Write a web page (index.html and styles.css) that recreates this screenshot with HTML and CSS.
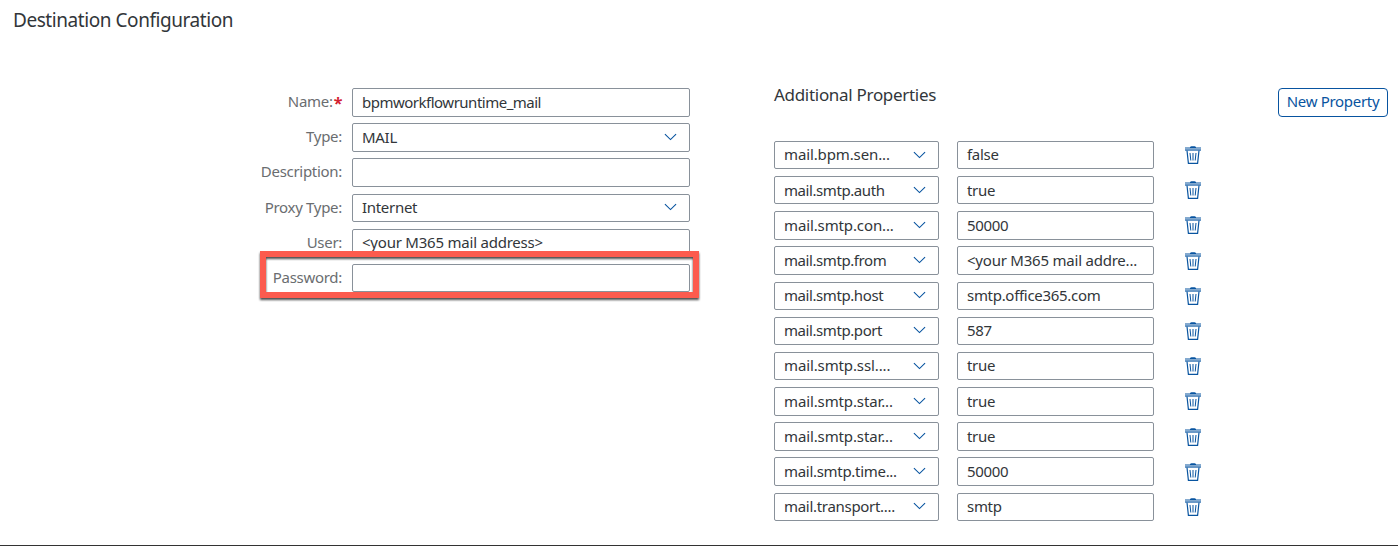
FILE: index.html
```html
<!DOCTYPE html>
<html lang="en">
<head>
<meta charset="utf-8">
<title>Destination Configuration</title>
<link rel="stylesheet" href="styles.css">
</head>
<body>
<svg width="0" height="0" class="defs">
  <symbol id="chevron" viewBox="0 0 14 8"><path d="M1 1 L7 6.8 L13 1" fill="none" stroke="currentColor" stroke-width="1.2"/></symbol>
  <symbol id="trash" viewBox="0 0 16 18">
    <path d="M5 1.3 Q5.5 0.2 6.5 0.2 H9.5 Q10.5 0.2 11 1.3 V2 H5 Z" fill="currentColor"/>
    <path d="M0 2 H16" stroke="currentColor" stroke-width="1"/>
    <path d="M0 4 H16" stroke="currentColor" stroke-width="1.2"/>
    <path d="M2 4.5 L3.4 17.3 H12.6 L14 4.5" fill="none" stroke="currentColor" stroke-width="1.2"/>
    <path d="M5 7 L5.8 14.5 M8 7 V14.5 M11 7 L10.2 14.5" stroke="currentColor" stroke-width="1"/>
  </symbol>
</svg>
<div class="page">
  <h1 class="title">Destination Configuration</h1>
  <main class="content">
    <section class="form">
      <div class="row"><label class="label">Name:<b class="required">*</b></label><div class="field"><span class="text wide">bpmworkflowruntime_mail</span></div></div>
      <div class="row"><label class="label">Type:</label><div class="field"><span class="text">MAIL</span><svg class="chevron"><use href="#chevron"/></svg></div></div>
      <div class="row"><label class="label">Description:</label><div class="field"></div></div>
      <div class="row"><label class="label">Proxy Type:</label><div class="field"><span class="text">Internet</span><svg class="chevron"><use href="#chevron"/></svg></div></div>
      <div class="row"><label class="label">User:</label><div class="field"><span class="text address">&lt;your M365 mail address&gt;</span></div></div>
      <div class="row"><label class="label">Password:</label><div class="field"></div><div class="highlight"></div></div>
    </section>
    <section class="properties">
      <header class="head"><h2 class="subtitle">Additional Properties</h2><button class="button">New Property</button></header>
      <div class="list">
        <div class="prop"><div class="field"><span class="text dotted">mail.bpm.sen...</span><svg class="chevron"><use href="#chevron"/></svg></div><div class="field"><span class="text">false</span></div><svg class="trash"><use href="#trash"/></svg></div>
        <div class="prop"><div class="field"><span class="text key">mail.smtp.auth</span><svg class="chevron"><use href="#chevron"/></svg></div><div class="field"><span class="text">true</span></div><svg class="trash"><use href="#trash"/></svg></div>
        <div class="prop"><div class="field"><span class="text dotted">mail.smtp.con...</span><svg class="chevron"><use href="#chevron"/></svg></div><div class="field"><span class="text">50000</span></div><svg class="trash"><use href="#trash"/></svg></div>
        <div class="prop"><div class="field"><span class="text key">mail.smtp.from</span><svg class="chevron"><use href="#chevron"/></svg></div><div class="field"><span class="text address">&lt;your M365 mail addre...</span></div><svg class="trash"><use href="#trash"/></svg></div>
        <div class="prop"><div class="field"><span class="text key">mail.smtp.host</span><svg class="chevron"><use href="#chevron"/></svg></div><div class="field"><span class="text">smtp.office365.com</span></div><svg class="trash"><use href="#trash"/></svg></div>
        <div class="prop"><div class="field"><span class="text key">mail.smtp.port</span><svg class="chevron"><use href="#chevron"/></svg></div><div class="field"><span class="text">587</span></div><svg class="trash"><use href="#trash"/></svg></div>
        <div class="prop"><div class="field"><span class="text dotted">mail.smtp.ssl....</span><svg class="chevron"><use href="#chevron"/></svg></div><div class="field"><span class="text">true</span></div><svg class="trash"><use href="#trash"/></svg></div>
        <div class="prop"><div class="field"><span class="text dotted">mail.smtp.star...</span><svg class="chevron"><use href="#chevron"/></svg></div><div class="field"><span class="text">true</span></div><svg class="trash"><use href="#trash"/></svg></div>
        <div class="prop"><div class="field"><span class="text dotted">mail.smtp.star...</span><svg class="chevron"><use href="#chevron"/></svg></div><div class="field"><span class="text">true</span></div><svg class="trash"><use href="#trash"/></svg></div>
        <div class="prop"><div class="field"><span class="text">mail.smtp.time...</span><svg class="chevron"><use href="#chevron"/></svg></div><div class="field"><span class="text">50000</span></div><svg class="trash"><use href="#trash"/></svg></div>
        <div class="prop"><div class="field"><span class="text">mail.transport....</span><svg class="chevron"><use href="#chevron"/></svg></div><div class="field"><span class="text">smtp</span></div><svg class="trash"><use href="#trash"/></svg></div>
      </div>
    </section>
  </main>
</div>
</body>
</html>
```
FILE: styles.css
```css
* { box-sizing: border-box; }
body { margin: 0; background: #fff; color: #32363a; font: 15px/20px "Noto Sans", sans-serif; letter-spacing: -0.3px; overflow: hidden; }
.defs { display: block; }
.page { height: 546px; border-bottom: 1px solid #333; padding: 8px 10px 0 14px; }
.title { margin: 0 0 0 -1px; font-size: 19px; line-height: 24px; font-weight: 400; letter-spacing: -0.44px; }
.content { display: grid; grid-template-columns: 676px 1fr; column-gap: 84px; padding-top: 56px; }
.form { display: grid; grid-auto-rows: 35.2px; }
.row { display: grid; grid-template-columns: 328px 338px; column-gap: 10px; position: relative; align-items: start; }
.label { color: #6a6d70; text-align: right; line-height: 26.6px; white-space: nowrap; }
.required { color: #d32030; font-size: 16px; line-height: 1; margin-left: 1px; vertical-align: -2px; }
.field { height: 28.5px; border: 1px solid #89919a; border-radius: 2px; display: flex; align-items: center; justify-content: space-between; padding: 0 12px 0 9px; white-space: nowrap; }
.text { line-height: 24px; padding-bottom: 1.4px; }
.wide { letter-spacing: -0.5px; }
.address { letter-spacing: -0.22px; }
.key { letter-spacing: -0.42px; }
.dotted { letter-spacing: -0.12px; }
.chevron { width: 13px; height: 8px; margin-bottom: 1px; color: #0854a0; flex: none; }
.highlight { position: absolute; left: 246px; top: -13px; width: 439px; height: 47px; border: 6px solid #fc5b4e; filter: drop-shadow(0 2px 1px rgba(0, 0, 0, 0.7)); }
.head { display: flex; justify-content: space-between; align-items: flex-start; height: 52.8px; }
.subtitle { margin: -5px 0 0; font-size: 17px; line-height: 24px; font-weight: 400; letter-spacing: -0.3px; }
.button { width: 110px; height: 29px; padding: 0 0 3px; border: 1px solid #0854a0; border-radius: 4px; background: #fff; color: #0854a0; font: inherit; letter-spacing: -0.3px; }
.list { display: grid; grid-auto-rows: 35.2px; }
.prop { display: grid; grid-template-columns: 165px 197px 16px; column-gap: 18px; align-items: start; }
.trash { width: 16px; height: 18px; margin: 5.3px 0 0 13px; color: #0854a0; }
```
